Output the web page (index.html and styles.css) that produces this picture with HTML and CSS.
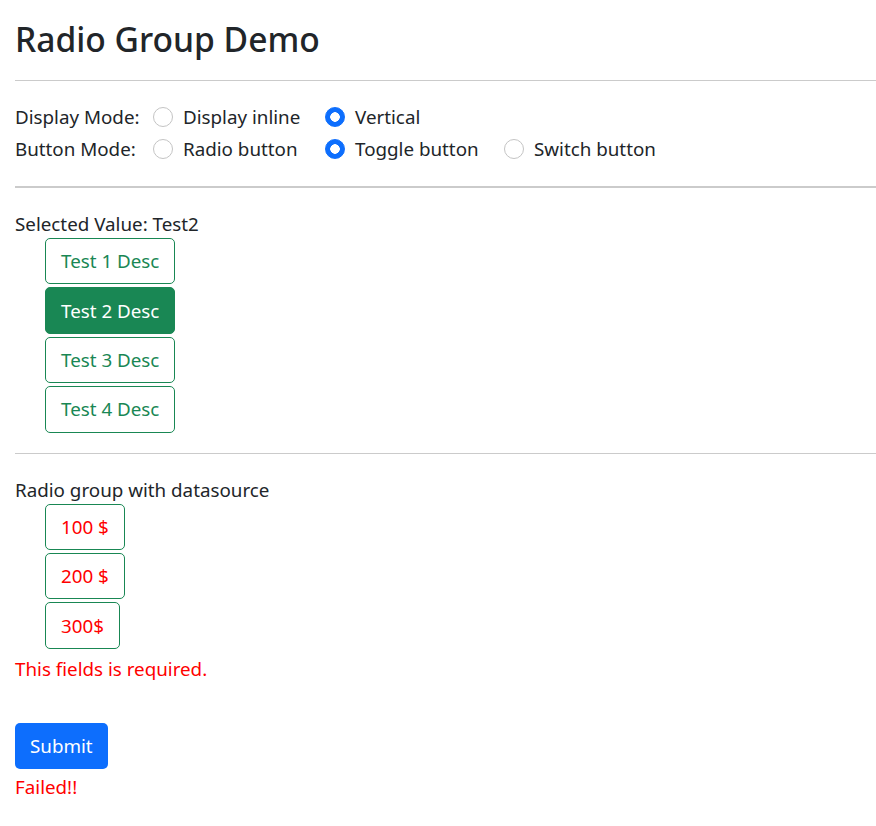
FILE: index.html
```html
<!DOCTYPE html>
<html lang="en">
<head>
<meta charset="utf-8">
<title>Radio Group Demo</title>
<link rel="stylesheet" href="styles.css">
</head>
<body>
<main class="page">
  <h1 class="title">Radio Group Demo</h1>
  <hr class="rule">
  <div class="modes">
    <span class="mode-label">Display Mode:</span>
    <label class="opt"><span class="radio"></span><span>Display inline</span></label>
    <label class="opt"><span class="radio checked"></span><span>Vertical</span></label>
    <span></span>
    <span class="mode-label">Button Mode:</span>
    <label class="opt"><span class="radio"></span><span>Radio button</span></label>
    <label class="opt"><span class="radio checked"></span><span>Toggle button</span></label>
    <label class="opt"><span class="radio"></span><span>Switch button</span></label>
  </div>
  <hr class="rule thick">
  <div class="line sel">Selected Value: Test2</div>
  <div class="group">
    <button class="tbtn">Test 1 Desc</button>
    <button class="tbtn active">Test 2 Desc</button>
    <button class="tbtn">Test 3 Desc</button>
    <button class="tbtn">Test 4 Desc</button>
  </div>
  <hr class="rule r3">
  <div class="line sel">Radio group with datasource</div>
  <div class="group">
    <button class="tbtn red">100 $</button>
    <button class="tbtn red">200 $</button>
    <button class="tbtn red">300$</button>
  </div>
  <div class="line error req">This fields is required.</div>
  <button class="submit">Submit</button>
  <div class="line error failed">Failed!!</div>
</main>
</body>
</html>
```
FILE: styles.css
```css
html, body {
  margin: 0;
  padding: 0;
  background: #fff;
}
body {
  font-family: "Noto Sans", "Open Sans", sans-serif;
  font-size: 18.8px;
  color: #212529;
}
.page {
  padding: 0 0 40px 15px;
}
.title {
  margin: 0;
  padding-top: 18px;
  font-size: 33.6px;
  font-weight: 500;
  line-height: 43px;
  height: 43px;
  color: #212529;
}
.rule {
  margin: 19px 0 0 0;
  border: 0;
  border-top: 1px solid #cbcbcb;
  height: 0;
}
.rule.thick {
  border-top-width: 2px;
  margin-top: 21px;
}
.modes {
  margin-top: 20px;
  display: grid;
  grid-template-columns: 138px 172px 179px auto;
  grid-auto-rows: 32px;
  align-items: center;
}
.opt {
  display: flex;
  align-items: center;
  gap: 10px;
  line-height: 28px;
}
.radio {
  width: 20px;
  height: 20px;
  box-sizing: border-box;
  border-radius: 50%;
  border: 1px solid #c4c4c4;
  background: #fff;
  flex: none;
}
.radio.checked {
  border-color: #0d6efd;
  background: radial-gradient(circle, #fff 0 4.5px, #0d6efd 5px);
}
.line {
  line-height: 28px;
  height: 28px;
}
.sel {
  margin-top: 22px;
}
.group {
  display: flex;
  flex-direction: column;
  align-items: flex-start;
  gap: 3px;
  padding-left: 30px;
}
.tbtn {
  font: inherit;
  height: 46.4px;
  padding: 0 15px;
  border: 1px solid #198754;
  border-radius: 5px;
  background: #fff;
  color: #198754;
  line-height: 28px;
}
.tbtn.active {
  background: #198754;
  color: #fff;
}
.tbtn.red {
  color: #ff0000;
}
.rule.r3 {
  margin-top: 20px;
}
.error {
  color: #ff0000;
}
.req {
  margin-top: 6px;
}
.submit {
  display: block;
  margin-top: 40px;
  font: inherit;
  height: 46.4px;
  padding: 0 15px;
  border: 0;
  border-radius: 5px;
  background: #0d6efd;
  color: #fff;
}
.failed {
  margin-top: 4px;
}
```
